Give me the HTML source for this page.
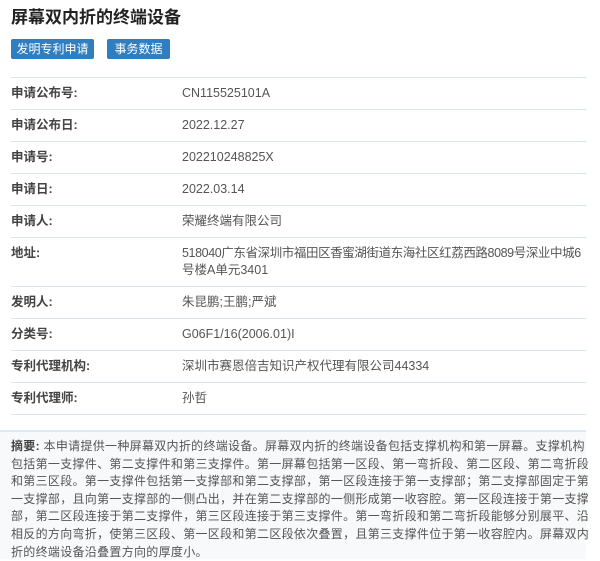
<!DOCTYPE html>
<html><head><meta charset="utf-8"><style>
body{margin:0;background:#fff;font-family:"Liberation Sans","Noto Sans CJK SC",sans-serif;color:#333;width:600px;height:557px;overflow:hidden;position:relative}
h1{position:absolute;left:11px;top:6px;margin:0;font-size:17px;font-weight:bold;color:#222;line-height:24px}
.btn{position:absolute;top:39px;height:20px;line-height:20px;background:#2f7ec0;color:#fff;font-size:12px;text-align:center;border-radius:2px}
.tbl{position:absolute;left:11px;top:77px;width:575px}
.row{border-top:1px solid #d9e6f2;position:relative;height:31px;font-size:12.5px}
.row .l{position:absolute;left:0;top:7px;line-height:17px;font-weight:bold;color:#444}
.row .v{position:absolute;left:171px;top:7px;width:420px;line-height:17px;color:#555;white-space:nowrap}
.abs{position:absolute;left:0;top:430px;width:586px;height:127px;background:#f7f9fb;border-top:2px solid #dde9f4}
.abs p{margin:0;position:absolute;left:11px;top:6px;width:590px;font-size:12px;line-height:17.6px;color:#555;white-space:nowrap;letter-spacing:0.3px}
</style></head><body>
<h1>屏幕双内折的终端设备</h1>
<div class="btn" style="left:11px;width:83px">发明专利申请</div>
<div class="btn" style="left:107px;width:63px">事务数据</div>
<div class="tbl">
<div class="row"><span class="l">申请公布号:</span><span class="v">CN115525101A</span></div>
<div class="row"><span class="l">申请公布日:</span><span class="v">2022.12.27</span></div>
<div class="row"><span class="l">申请号:</span><span class="v">202210248825X</span></div>
<div class="row"><span class="l">申请日:</span><span class="v">2022.03.14</span></div>
<div class="row"><span class="l">申请人:</span><span class="v">荣耀终端有限公司</span></div>
<div class="row" style="height:48px"><span class="l">地址:</span><span class="v"><span style="letter-spacing:-0.4px">518040广东省深圳市福田区香蜜湖街道东海社区红荔西路8089号深业中城6</span><br>号楼A单元3401</span></div>
<div class="row"><span class="l">发明人:</span><span class="v">朱昆鹏;王鹏;严斌</span></div>
<div class="row"><span class="l">分类号:</span><span class="v">G06F1/16(2006.01)I</span></div>
<div class="row"><span class="l">专利代理机构:</span><span class="v">深圳市赛恩倍吉知识产权代理有限公司44334</span></div>
<div class="row"><span class="l">专利代理师:</span><span class="v">孙哲</span></div>
<div class="row" style="height:17px"></div>
</div>
<div class="abs"><p><b style="color:#444">摘要:</b> 本申请提供一种屏幕双内折的终端设备。屏幕双内折的终端设备包括支撑机构和第一屏幕。支撑机构<br>包括第一支撑件、第二支撑件和第三支撑件。第一屏幕包括第一区段、第一弯折段、第二区段、第二弯折段<br>和第三区段。第一支撑件包括第一支撑部和第二支撑部，第一区段连接于第一支撑部；第二支撑部固定于第<br>一支撑部，且向第一支撑部的一侧凸出，并在第二支撑部的一侧形成第一收容腔。第一区段连接于第一支撑<br>部，第二区段连接于第二支撑件，第三区段连接于第三支撑件。第一弯折段和第二弯折段能够分别展平、沿<br>相反的方向弯折，使第三区段、第一区段和第二区段依次叠置，且第三支撑件位于第一收容腔内。屏幕双内<br>折的终端设备沿叠置方向的厚度小。</p></div>
</body></html>
